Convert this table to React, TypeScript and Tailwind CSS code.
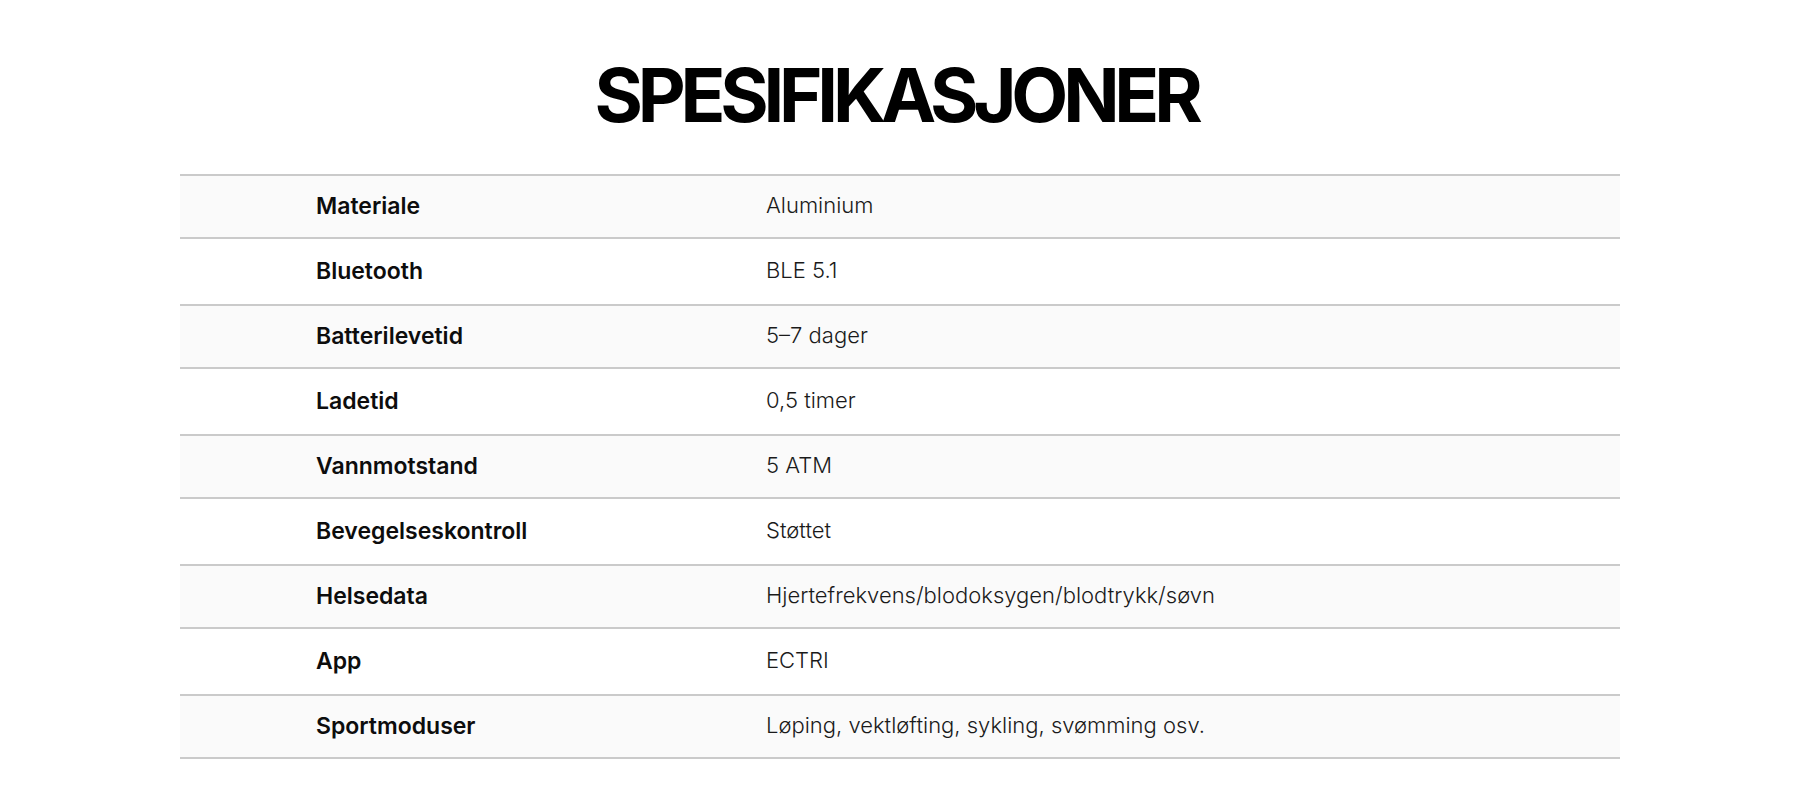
const SPECS: { label: string; value: string }[] = [
  { label: 'Materiale', value: 'Aluminium' },
  { label: 'Bluetooth', value: 'BLE 5.1' },
  { label: 'Batterilevetid', value: '5–7 dager' },
  { label: 'Ladetid', value: '0,5 timer' },
  { label: 'Vannmotstand', value: '5 ATM' },
  { label: 'Bevegelseskontroll', value: 'Støttet' },
  { label: 'Helsedata', value: 'Hjertefrekvens/blodoksygen/blodtrykk/søvn' },
  { label: 'App', value: 'ECTRI' },
  { label: 'Sportmoduser', value: 'Løping, vektløfting, sykling, svømming osv.' },
]

export default function App() {
  return (
    <div className="min-h-screen bg-white font-['Inter','Noto_Sans',sans-serif]">
      <div className="w-[1440px] mx-auto pt-[58px]">
        {/* Tittel */}
        <h1 className="text-center text-[74px] leading-[74px] font-bold text-black tracking-[-0.07em] pr-[8px]">
          SPESIFIKASJONER
        </h1>

        {/* Tabell */}
        <div className="mt-[42px] border-t-2 border-[#cacaca]">
          {SPECS.map((s, i) => (
            <div
              key={s.label}
              className={`flex items-center border-b-2 border-[#cacaca] ${
                i % 2 === 0 ? 'bg-[#fafafa] h-[63px]' : 'bg-white h-[67px]'
              }`}
            >
              <div className="w-[586px] pl-[136px] text-[23px] font-semibold text-[#0d0d0d] leading-none">
                {s.label}
              </div>
              <div className="text-[22px] font-light text-[#1a1a1a] leading-none pb-[3px]">{s.value}</div>
            </div>
          ))}
        </div>
      </div>
    </div>
  )
}
